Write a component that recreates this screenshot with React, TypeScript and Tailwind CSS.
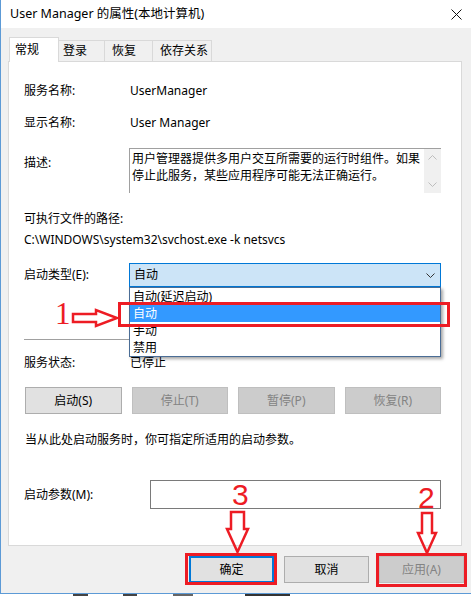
import React from "react";

const tabs = [
  { name: "登录", w: "w-[46px]", pl: "pl-[4px]" },
  { name: "恢复", w: "w-[48px]", pl: "pl-[7px]" },
  { name: "依存关系", w: "w-[59px]", pl: "pl-[7px]" },
];

function Row({ label, children }: { label: string; children?: React.ReactNode }) {
  return (
    <div className="flex items-center h-[20px]">
      <div className="w-[106px] shrink-0">{label}</div>
      <div>{children}</div>
    </div>
  );
}

function Chevron({ up = false, color = "#333" }: { up?: boolean; color?: string }) {
  return (
    <svg width="9" height="5" viewBox="0 0 9 5">
      <polyline
        points={up ? "0.5,4.5 4.5,0.5 8.5,4.5" : "0.5,0.5 4.5,4.5 8.5,0.5"}
        fill="none"
        stroke={color}
        strokeWidth="1"
      />
    </svg>
  );
}

export default function App() {
  return (
    <div className="w-[471px] h-[596px] bg-white overflow-hidden relative text-[12px] text-black font-['Noto_Sans','Noto_Sans_CJK_SC',sans-serif]">
      {/* window */}
      <div className="w-[471px] h-[594px] border-l border-b border-[#5c9ad6] bg-[#f0f0f0] flex flex-col">
        {/* title bar */}
        <div className="h-[28px] bg-white flex items-center justify-between pl-[9px] pr-[9px] shrink-0">
          <span className="text-[12.5px]">User Manager 的属性(本地计算机)</span>
          <svg width="11" height="11" viewBox="0 0 11 11">
            <path d="M0.5 0.5 L10.5 10.5 M10.5 0.5 L0.5 10.5" stroke="#111" strokeWidth="1" />
          </svg>
        </div>

        {/* tabs */}
        <div className="mt-[9px] ml-[8px] flex items-start h-[24px] shrink-0">
          <div className="relative z-10 w-[50px] h-[25px] bg-white border border-b-0 border-[#d9d9d9] pl-[5px] flex items-center">
            常规
          </div>
          {tabs.map((t) => (
            <div
              key={t.name}
              className={`${t.w} ${t.pl} mt-[3px] h-[21px] border border-l-0 border-b-0 border-[#d9d9d9] flex items-center`}
            >
              {t.name}
            </div>
          ))}
        </div>

        {/* panel */}
        <div className="ml-[7px] w-[454px] h-[485px] border border-[#d9d9d9] bg-white pl-[15px] pr-[20px] flex flex-col shrink-0">
          <div className="mt-[19px]">
            <Row label="服务名称:">UserManager</Row>
          </div>
          <div className="mt-[12px]">
            <Row label="显示名称:">User Manager</Row>
          </div>

          {/* description */}
          <div className="mt-[15px] flex h-[45px]">
            <div className="w-[105px] shrink-0 pt-[5px] leading-[20px]">描述:</div>
            <div className="w-[312px] h-[45px] border-t border-l border-[#a0a0a0] flex">
              <div className="flex-1 pl-[2px] pt-[1px] leading-[17px] text-[12px]">
                用户管理器提供多用户交互所需要的运行时组件。如果
                <br />
                停止此服务，某些应用程序可能无法正确运行。
              </div>
              <div className="w-[17px] bg-[#f0f0f0] flex flex-col items-center justify-between pt-[6px] pb-[6px]">
                <Chevron up color="#bdbdbd" />
                <Chevron color="#bdbdbd" />
              </div>
            </div>
          </div>

          <div className="mt-[16px] h-[20px] flex items-center">可执行文件的路径:</div>
          <div className="mt-[1px] h-[20px] flex items-center">C:\WINDOWS\system32\svchost.exe -k netsvcs</div>

          {/* startup type */}
          <div className="mt-[13px] flex items-center h-[24px]">
            <div className="w-[105px] shrink-0">启动类型(E):</div>
            <div className="relative w-[312px] h-[24px]">
              <div className="w-full h-full bg-[#cce4f7] border border-[#0078d7] flex items-center justify-between pl-[4px] pr-[5px]">
                <span>自动</span>
                <Chevron />
              </div>
              {/* open list */}
              <div className="absolute left-0 top-full w-full z-20 bg-white border border-[#4a6d96] shadow-[2px_2px_3px_rgba(0,0,0,0.35)] flex flex-col">
                <div className="h-[17px] pl-[3px] flex items-center">自动(延迟启动)</div>
                <div className="h-[17px] pl-[3px] flex items-center bg-[#3399ff] text-white">自动</div>
                <div className="h-[17px] pl-[3px] flex items-center">手动</div>
                <div className="h-[17px] pl-[3px] flex items-center">禁用</div>
              </div>
            </div>
          </div>

          <div className="mt-[52px] h-px bg-[#a0a0a0]" />

          <div className="mt-[13px]">
            <Row label="服务状态:">已停止</Row>
          </div>

          <div className="mt-[14px] ml-[1px] w-[416px] grid grid-cols-4 gap-[10px]">
            <div className="h-[27px] bg-[#e1e1e1] border border-[#adadad] flex items-center justify-center">启动(S)</div>
            <div className="h-[27px] bg-[#cccccc] border border-[#bfbfbf] text-[#838383] flex items-center justify-center">停止(T)</div>
            <div className="h-[27px] bg-[#cccccc] border border-[#bfbfbf] text-[#838383] flex items-center justify-center">暂停(P)</div>
            <div className="h-[27px] bg-[#cccccc] border border-[#bfbfbf] text-[#838383] flex items-center justify-center">恢复(R)</div>
          </div>

          <div className="mt-[16px] ml-[1px] h-[20px] flex items-center">
            当从此处启动服务时，你可指定所适用的启动参数。
          </div>

          <div className="mt-[30px] flex items-center h-[29px]">
            <div className="w-[126px] shrink-0">启动参数(M):</div>
            <div className="w-[291px] h-[29px] border border-[#7a7a7a] bg-white" />
          </div>
        </div>

        {/* dialog buttons */}
        <div className="mt-[10px] flex justify-end gap-[10px] pr-[7px]">
          <div className="w-[85px] h-[27px] bg-[#e1e1e1] border-2 border-[#0078d7] flex items-center justify-center">确定</div>
          <div className="w-[85px] h-[27px] bg-[#e1e1e1] border border-[#adadad] flex items-center justify-center">取消</div>
          <div className="w-[85px] h-[27px] bg-[#cccccc] border border-[#bfbfbf] text-[#838383] flex items-center justify-center">应用(A)</div>
        </div>
      </div>

      {/* page behind the dialog */}
      <div className="flex h-[2px] gap-0">
        <div className="ml-[73px] w-[15px] bg-[#444]" />
        <div className="ml-[35px] w-[14px] bg-[#444]" />
        <div className="ml-[36px] w-[20px] bg-[#666]" />
        <div className="ml-[52px] w-[45px] bg-[#333]" />
      </div>

      {/* red annotations */}
      <div className="absolute left-[118px] top-[302px] w-[332px] h-[25px] border-[3px] border-[#ed1c24] z-30" />
      <div className="absolute left-[185px] top-[553px] w-[92px] h-[32px] border-[3px] border-[#ed1c24] z-30" />
      <div className="absolute left-[376px] top-[553px] w-[91px] h-[34px] border-[3px] border-[#ed1c24] z-30" />

      <svg className="absolute left-0 top-0 z-30 pointer-events-none" width="471" height="596" viewBox="0 0 471 596">
        <polygon
          points="73,314 96,314 96,310 117,318 96,326 96,322 73,322"
          fill="none"
          stroke="#ed1c24"
          strokeWidth="2.5"
        />
        <polygon
          points="231,512 244,512 244,529 248,529 237.5,552 227,529 231,529"
          fill="none"
          stroke="#ed1c24"
          strokeWidth="2.5"
        />
        <polygon
          points="422,513 432,513 432,533 436,533 427,553 418,533 422,533"
          fill="none"
          stroke="#ed1c24"
          strokeWidth="2.5"
        />
      </svg>

      <span className="absolute left-[55px] top-[297px] z-30 text-[31px] leading-[34px] text-[#ed1c24] font-['Liberation_Serif',serif]">1</span>
      <span className="absolute left-[232px] top-[478px] z-30 text-[30px] leading-[34px] text-[#ed1c24] font-['Liberation_Sans',sans-serif]">3</span>
      <span className="absolute left-[418px] top-[481px] z-30 text-[30px] leading-[34px] text-[#ed1c24] font-['Liberation_Sans',sans-serif]">2</span>
    </div>
  );
}
